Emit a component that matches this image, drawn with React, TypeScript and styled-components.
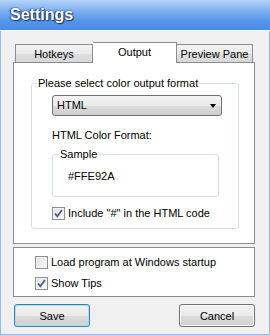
import React from "react";
import styled, { createGlobalStyle } from "styled-components";

const Global = createGlobalStyle`
  html, body { margin: 0; padding: 0; background: #f0f0f0; }
  * { box-sizing: border-box; }
`;

const Window = styled.div`
  width: 270px;
  height: 335px;
  display: flex;
  flex-direction: column;
  background: #f0f0f0;
  font-family: "Liberation Sans", Arial, sans-serif;
  font-size: 11px;
  line-height: 13px;
  color: #000;
`;

const TitleBar = styled.div`
  height: 31px;
  flex: none;
  display: flex;
  align-items: center;
  padding: 0 0 1px 10px;
  background: linear-gradient(#b6d3f7 0%, #7fb1f0 35%, #5595ea 70%, #4a8be6 100%);
  border-bottom: 1px solid #f4f8fd;
`;

const Title = styled.h1`
  margin: 0;
  font-family: "Liberation Sans", Arial, sans-serif;
  font-size: 16px;
  line-height: 18px;
  font-weight: bold;
  color: #fff;
  text-shadow: 0 0 2px #233f6c, 1px 1px 1px #1f3458, -1px 0 1px #2a4a7a;
`;

const Body = styled.div`
  flex: 1;
  display: flex;
  flex-direction: column;
  padding: 11px 14px 0 12px;
  border: 1px solid #9cb8e4;
  border-top: none;
`;

const TabRow = styled.div`
  display: flex;
  align-items: flex-end;
  height: 21px;
  padding-left: 2px;
  margin-bottom: -1px;
  position: relative;
  z-index: 1;
`;

const Tab = styled.div<{ $active?: boolean; $w: number }>`
  width: ${(p) => p.$w}px;
  height: ${(p) => (p.$active ? 21 : 18)}px;
  margin-bottom: ${(p) => (p.$active ? 0 : 1)}px;
  border: 1px solid #898c95;
  border-bottom: none;
  display: flex;
  justify-content: center;
  align-items: flex-start;
  padding-top: 3px;
  background: ${(p) =>
    p.$active ? "#fff" : "linear-gradient(#f3f3f3 0%, #ebebeb 50%, #dedede 51%, #d8d8d8 100%)"};
  & + & {
    border-left: none;
  }
`;

const Panel = styled.div`
  height: 182px;
  border: 1px solid #898c95;
  background: #fff;
  padding: 20px 0 0 17px;
`;

const Group = styled.section<{ $w: number }>`
  position: relative;
  width: ${(p) => p.$w}px;
  border: 1px solid #d5dfe5;
  border-radius: 3px;
`;

const MainGroup = styled(Group)`
  padding: 11px 0 8px 20px;
`;

const SampleGroup = styled(Group)`
  margin-top: 12px;
  padding: 15px 0 13px 15px;
`;

const Legend = styled.span<{ $left: number }>`
  position: absolute;
  top: -7px;
  left: ${(p) => p.$left}px;
  padding: 0 1px;
  background: #fff;
  line-height: 13px;
  white-space: nowrap;
`;

const Select = styled.div`
  width: 170px;
  height: 21px;
  border: 1px solid #707070;
  border-radius: 3px;
  background: linear-gradient(#f2f2f2 0%, #ebebeb 50%, #dddddd 51%, #cfcfcf 100%);
  display: flex;
  align-items: center;
  justify-content: space-between;
  padding: 0 5px 0 4px;
`;

const Arrow = styled.span`
  width: 0;
  height: 0;
  border-left: 3.5px solid transparent;
  border-right: 3.5px solid transparent;
  border-top: 4px solid #000;
`;

const Label = styled.div`
  margin-top: 13px;
`;

const SampleText = styled.div``;

const CheckRow = styled.label<{ $mt?: number }>`
  display: flex;
  align-items: center;
  gap: 3px;
  height: 13px;
  margin-top: ${(p) => p.$mt ?? 0}px;
`;

const Box = styled.span`
  width: 13px;
  height: 13px;
  flex: none;
  border: 1px solid #8e8f8f;
  background: linear-gradient(135deg, #dcdcdc 0%, #f0f0f0 60%, #fbfbfb 100%);
  box-shadow: inset 0 0 0 1px #f4f4f4;
  display: flex;
  align-items: center;
  justify-content: center;
`;

const BottomGroup = styled.div`
  margin-top: 3px;
  height: 50px;
  border: 1px solid #898c95;
  background: #fff;
  padding: 8px 0 0 21px;
  display: flex;
  flex-direction: column;
  gap: 8px;
`;

const ButtonRow = styled.div`
  display: flex;
  justify-content: space-between;
  margin-top: 7px;
  padding-left: 1px;
`;

const Button = styled.button<{ $default?: boolean }>`
  width: 76px;
  height: 23px;
  padding: 0;
  font-family: "Liberation Sans", Arial, sans-serif;
  font-size: 11px;
  font-weight: normal;
  color: #000;
  border-radius: 3px;
  border: 1px solid ${(p) => (p.$default ? "#3c7fb1" : "#707070")};
  box-shadow: inset 0 0 0 1px ${(p) => (p.$default ? "#a6e3f9" : "#fbfbfb")};
  background: linear-gradient(#f2f2f2 0%, #ebebeb 50%, #dddddd 51%, #cfcfcf 100%);
`;

function CheckBox({ checked }: { checked: boolean }) {
  return (
    <Box>
      {checked && (
        <svg width="9" height="9" viewBox="0 0 9 9">
          <path d="M1 4.5 L3.3 7.2 L8 1" fill="none" stroke="#4a5e9c" strokeWidth="1.8" />
        </svg>
      )}
    </Box>
  );
}

export default function App() {
  return (
    <Window>
      <Global />
      <TitleBar>
        <Title>Settings</Title>
      </TitleBar>
      <Body>
        <TabRow>
          <Tab $w={78}>Hotkeys</Tab>
          <Tab $w={84} $active>Output</Tab>
          <Tab $w={76}>Preview Pane</Tab>
        </TabRow>
        <Panel>
          <MainGroup $w={208}>
            <Legend $left={5}>Please select color output format</Legend>
            <Select>
              <span>HTML</span>
              <Arrow />
            </Select>
            <Label>HTML Color Format:</Label>
            <SampleGroup $w={167}>
              <Legend $left={6}>Sample</Legend>
              <SampleText>#FFE92A</SampleText>
            </SampleGroup>
            <CheckRow $mt={10}>
              <CheckBox checked />
              <span>Include "#" in the HTML code</span>
            </CheckRow>
          </MainGroup>
        </Panel>
        <BottomGroup>
          <CheckRow>
            <CheckBox checked={false} />
            <span>Load program at Windows startup</span>
          </CheckRow>
          <CheckRow>
            <CheckBox checked />
            <span>Show Tips</span>
          </CheckRow>
        </BottomGroup>
        <ButtonRow>
          <Button $default>Save</Button>
          <Button>Cancel</Button>
        </ButtonRow>
      </Body>
    </Window>
  );
}
